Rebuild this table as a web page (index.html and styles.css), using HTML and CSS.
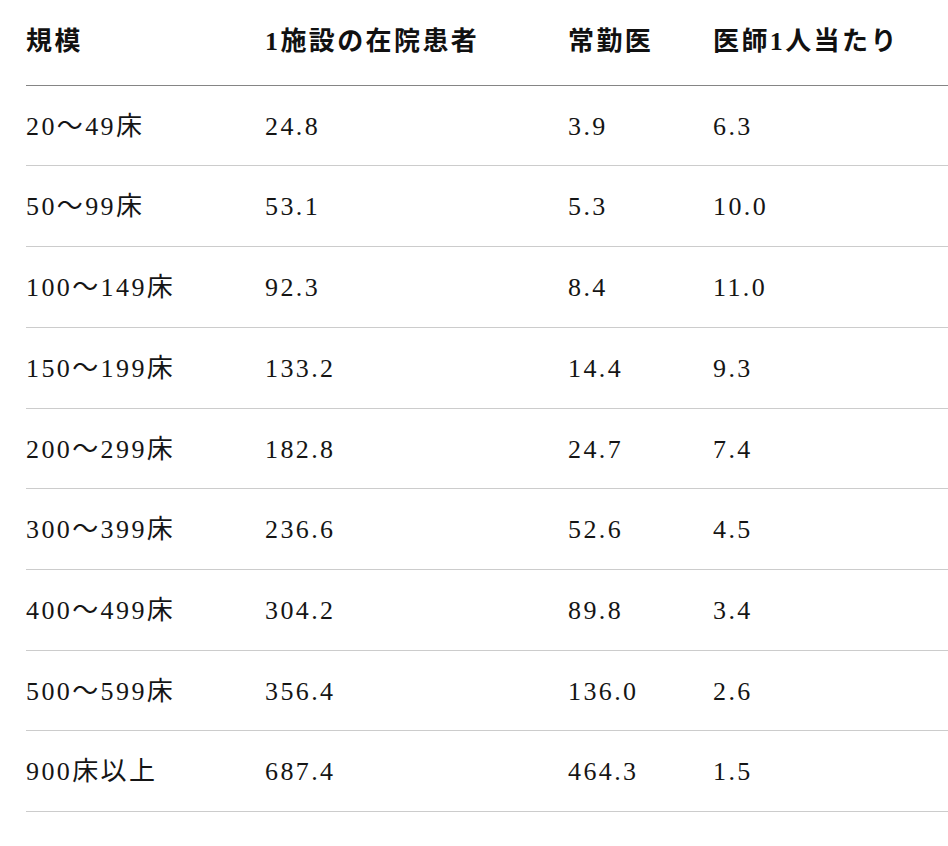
FILE: index.html
```html
<!DOCTYPE html>
<html lang="ja">
<head>
<meta charset="utf-8">
<link rel="stylesheet" href="styles.css">
</head>
<body>
<table class="data">
  <thead>
    <tr>
      <th class="c1">規模</th>
      <th class="c2">1施設の在院患者</th>
      <th class="c3">常勤医</th>
      <th class="c4">医師1人当たり</th>
    </tr>
  </thead>
  <tbody>
    <tr><td>20〜49床</td><td>24.8</td><td>3.9</td><td>6.3</td></tr>
    <tr><td>50〜99床</td><td>53.1</td><td>5.3</td><td>10.0</td></tr>
    <tr><td>100〜149床</td><td>92.3</td><td>8.4</td><td>11.0</td></tr>
    <tr><td>150〜199床</td><td>133.2</td><td>14.4</td><td>9.3</td></tr>
    <tr><td>200〜299床</td><td>182.8</td><td>24.7</td><td>7.4</td></tr>
    <tr><td>300〜399床</td><td>236.6</td><td>52.6</td><td>4.5</td></tr>
    <tr><td>400〜499床</td><td>304.2</td><td>89.8</td><td>3.4</td></tr>
    <tr><td>500〜599床</td><td>356.4</td><td>136.0</td><td>2.6</td></tr>
    <tr><td>900床以上</td><td>687.4</td><td>464.3</td><td>1.5</td></tr>
  </tbody>
</table>
</body>
</html>
```

FILE: styles.css
```css
html, body {
  margin: 0;
  padding: 0;
  background: #ffffff;
}

body {
  padding-left: 26px;
  font-family: "Liberation Serif", "Noto Sans CJK JP", serif;
  color: #151515;
  font-size: 26px;
  letter-spacing: 2.4px;
}

.data {
  border-collapse: collapse;
  width: 940px;
  table-layout: fixed;
}

.data th,
.data td {
  text-align: left;
  padding: 0;
  white-space: nowrap;
  line-height: 39.7px;
}

.data th {
  font-weight: bold;
  color: #111111;
  padding-top: 22px;
  padding-bottom: 23px;
  border-bottom: 1px solid #858585;
}

.data td {
  padding-top: 21px;
  padding-bottom: 19px;
  border-bottom: 1px solid #cccccc;
}

.c1 { width: 239px; }
.c2 { width: 303px; }
.c3 { width: 145px; }
.c4 { width: 253px; }
```
